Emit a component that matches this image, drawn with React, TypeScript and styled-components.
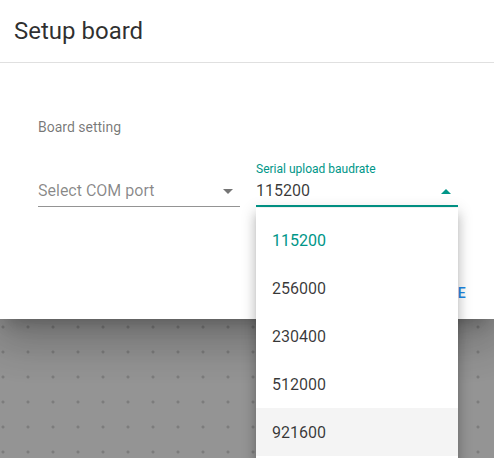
import React from "react";
import styled, { createGlobalStyle } from "styled-components";

const GlobalStyle = createGlobalStyle`
  html, body { margin: 0; padding: 0; }
  body { font-family: Roboto, "Noto Sans", "Liberation Sans", sans-serif; background: #949494; }
`;

const Page = styled.div`
  position: relative;
  width: 494px;
  height: 458px;
  overflow: hidden;
  display: flex;
  flex-direction: column;
`;

const Dialog = styled.div`
  position: relative;
  z-index: 2;
  background: #fff;
  box-shadow: 0 11px 15px -7px rgba(0,0,0,0.2), 0 24px 38px 3px rgba(0,0,0,0.14), 0 9px 46px 8px rgba(0,0,0,0.12);
`;

const Header = styled.div`
  height: 62px;
  display: flex;
  align-items: center;
  padding-left: 14px;
  border-bottom: 1px solid #e0e0e0;
`;

const Title = styled.h2`
  margin: 0;
  font-size: 24px;
  font-weight: 400;
  color: rgba(0,0,0,0.82);
  line-height: 28px;
`;

const Content = styled.div`
  padding: 56px 36px 0 38px;
`;

const Section = styled.div`
  font-size: 14px;
  line-height: 16px;
  color: rgba(0,0,0,0.54);
`;

const Fields = styled.div`
  display: grid;
  grid-template-columns: 202px 202px;
  column-gap: 16px;
  margin-top: 28px;
`;

const Field = styled.div`
  display: flex;
  flex-direction: column;
`;

const Label = styled.div<{ $active?: boolean }>`
  height: 12px;
  font-size: 12px;
  line-height: 12px;
  color: ${(p) => (p.$active ? "#009688" : "transparent")};
`;

const InputBox = styled.div<{ $active?: boolean }>`
  position: relative;
  padding: 6px 0 7px;
  line-height: 19px;
  font-size: 16px;
  &::after {
    content: "";
    position: absolute;
    left: 0;
    right: 0;
    bottom: 0;
    height: ${(p) => (p.$active ? "2px" : "1px")};
    background: ${(p) => (p.$active ? "#009688" : "rgba(0,0,0,0.42)")};
  }
`;

const Value = styled.span<{ $placeholder?: boolean }>`
  color: ${(p) => (p.$placeholder ? "rgba(0,0,0,0.47)" : "rgba(0,0,0,0.78)")};
`;

const ArrowIcon = styled.svg`
  position: absolute;
  right: 0;
  top: calc(50% - 12px);
  width: 24px;
  height: 24px;
`;

const Actions = styled.div`
  display: flex;
  justify-content: flex-end;
  padding: 8px 12px 8px 8px;
  margin-top: 60px;
`;

const TextButton = styled.button`
  height: 36px;
  padding: 0 16px;
  border: none;
  background: transparent;
  font-family: inherit;
  font-size: 14px;
  font-weight: 500;
  letter-spacing: 0.4px;
  color: #1e88e5;
  text-transform: uppercase;
`;

const Canvas = styled.div`
  flex: 1;
  background-color: #949494;
  background-image: radial-gradient(circle at 3px 8px, #7c7c7c 0, #7c7c7c 1.1px, transparent 1.9px);
  background-size: 25px 25px;
`;

const Menu = styled.ul`
  position: absolute;
  z-index: 3;
  left: 256px;
  top: 208px;
  width: 202px;
  margin: 0;
  padding: 8px 0;
  list-style: none;
  background: #fff;
  box-shadow: 0 5px 5px -3px rgba(0,0,0,0.2), 0 8px 10px 1px rgba(0,0,0,0.14), 0 3px 14px 2px rgba(0,0,0,0.12);
`;

const MenuItem = styled.li<{ $selected?: boolean; $hover?: boolean }>`
  height: 48px;
  display: flex;
  align-items: center;
  padding-left: 16px;
  font-size: 16px;
  color: ${(p) => (p.$selected ? "#009688" : "rgba(0,0,0,0.78)")};
  background: ${(p) => (p.$hover ? "#f4f4f4" : "transparent")};
`;

const rates = ["115200", "256000", "230400", "512000", "921600"];

export default function App() {
  return (
    <>
      <GlobalStyle />
      <Page>
        <Dialog>
          <Header>
            <Title>Setup board</Title>
          </Header>
          <Content>
            <Section>Board setting</Section>
            <Fields>
              <Field>
                <Label />
                <InputBox>
                  <Value $placeholder>Select COM port</Value>
                  <ArrowIcon viewBox="0 0 24 24">
                    <path d="M7 10l5 5 5-5z" fill="rgba(0,0,0,0.54)" />
                  </ArrowIcon>
                </InputBox>
              </Field>
              <Field>
                <Label $active>Serial upload baudrate</Label>
                <InputBox $active>
                  <Value>115200</Value>
                  <ArrowIcon viewBox="0 0 24 24">
                    <path d="M7 15l5-5 5 5z" fill="#009688" />
                  </ArrowIcon>
                </InputBox>
              </Field>
            </Fields>
          </Content>
          <Actions>
            <TextButton>Save</TextButton>
          </Actions>
        </Dialog>
        <Canvas />
        <Menu>
          {rates.map((r, i) => (
            <MenuItem key={r} $selected={i === 0} $hover={i === 4}>
              {r}
            </MenuItem>
          ))}
        </Menu>
      </Page>
    </>
  );
}
